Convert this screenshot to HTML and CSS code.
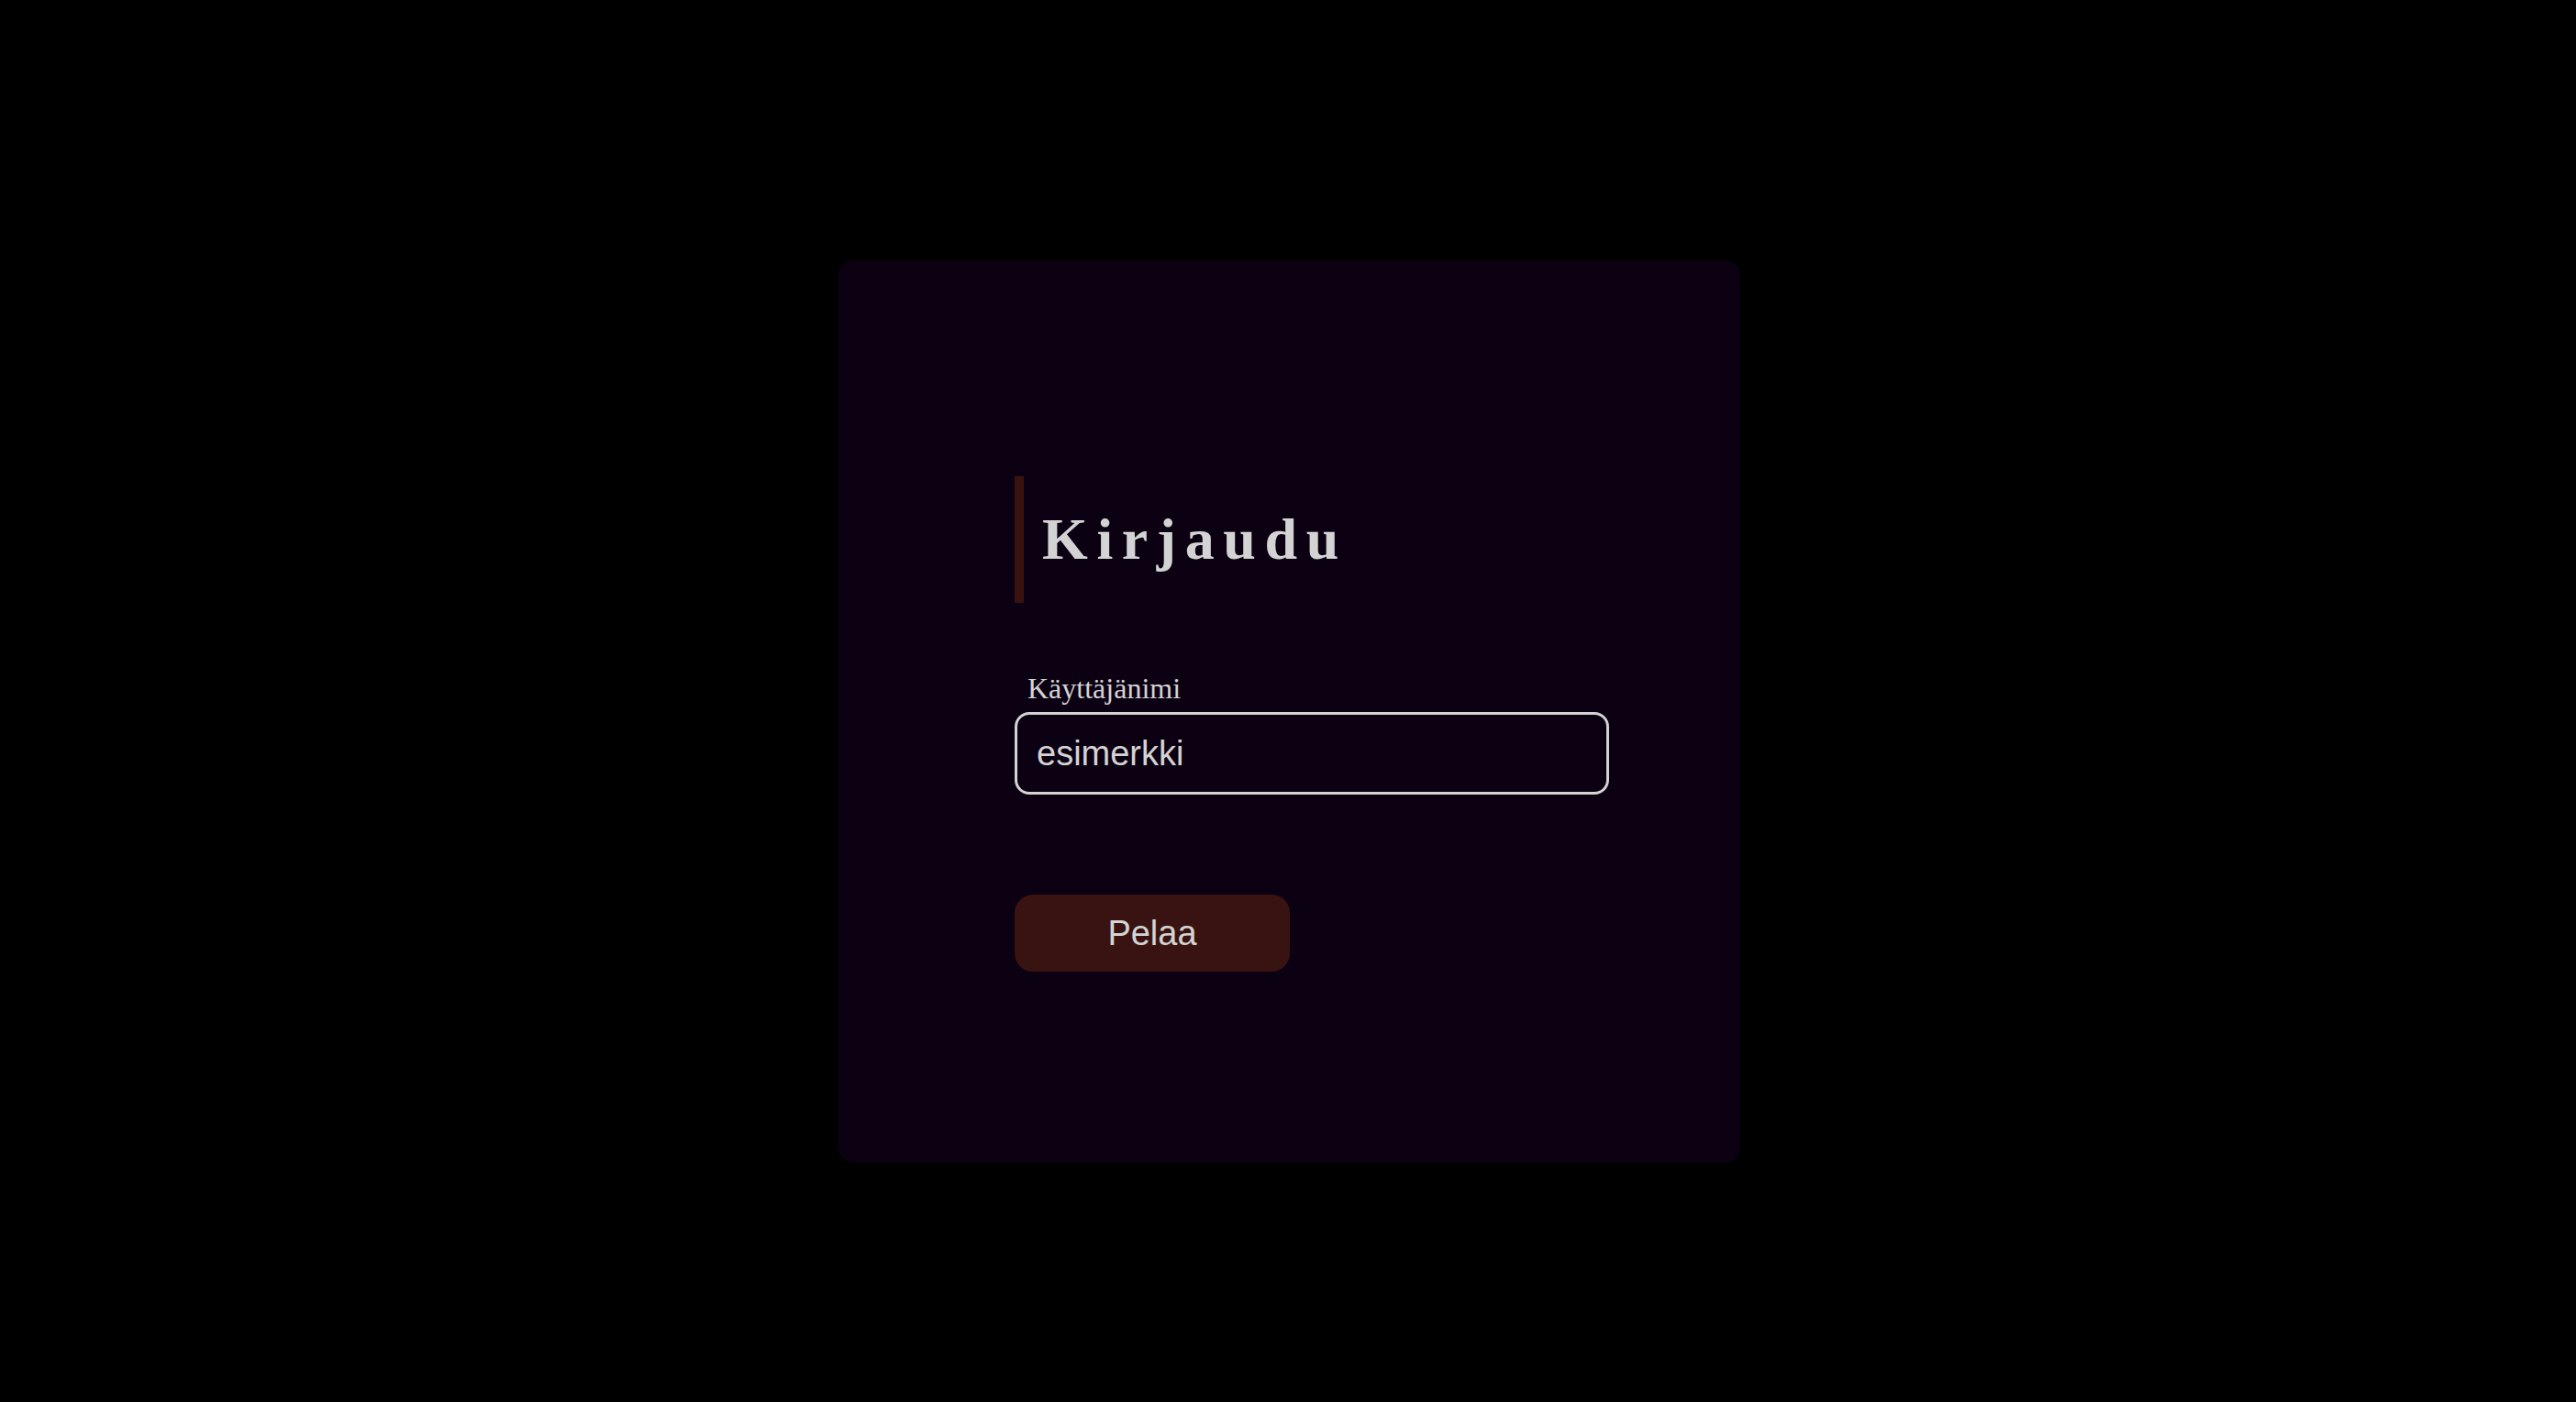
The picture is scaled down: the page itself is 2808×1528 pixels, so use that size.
FILE: index.html
```
<!DOCTYPE html>
<html lang="fi">
<head>
<meta charset="utf-8">
<title>Kirjaudu</title>
<link rel="stylesheet" href="styles.css">
</head>
<body>
<main class="page">
  <section class="card">
    <form class="login">
      <h1 class="title">Kirjaudu</h1>
      <label class="label" for="user">Käyttäjänimi</label>
      <input class="input" id="user" type="text" value="esimerkki">
      <button class="play" type="button">Pelaa</button>
    </form>
  </section>
</main>
</body>
</html>
```
FILE: styles.css
```
html, body {
  margin: 0;
  padding: 0;
  background: #000;
}
.page {
  box-sizing: border-box;
  height: 100vh;
  display: flex;
  align-items: center;
  justify-content: center;
  padding: 23px 0 0 3px;
  overflow: hidden;
}
.card {
  box-sizing: border-box;
  width: 983px;
  height: 983px;
  background: #0c0013;
  border-radius: 16px;
  padding: 235px 0 0 192px;
}
.login {
  display: flex;
  flex-direction: column;
  align-items: flex-start;
}
.title {
  margin: 0;
  border-left: 10px solid #3a1311;
  padding: 33px 0 33px 20px;
  font-family: "Liberation Serif", "Times New Roman", serif;
  font-weight: bold;
  font-size: 64px;
  line-height: 72px;
  letter-spacing: 0.15em;
  color: #d3d3d3;
}
.label {
  margin: 76px 0 0 14px;
  font-family: "Liberation Serif", "Times New Roman", serif;
  font-size: 32px;
  line-height: 35px;
  color: #d3d3d3;
}
.input {
  box-sizing: border-box;
  margin-top: 8px;
  width: 648px;
  height: 90px;
  border: 3px solid #d3d3d3;
  border-radius: 16px;
  padding: 0 21px;
  background: transparent;
  color: #d3d3d3;
  font-family: "Liberation Sans", Arial, sans-serif;
  font-size: 38px;
  outline: none;
}
.play {
  margin-top: 109px;
  width: 300px;
  height: 84px;
  border: none;
  border-radius: 20px;
  background: #391311;
  color: #d3d3d3;
  font-family: "Liberation Sans", Arial, sans-serif;
  font-size: 38px;
  padding: 0;
}
```
